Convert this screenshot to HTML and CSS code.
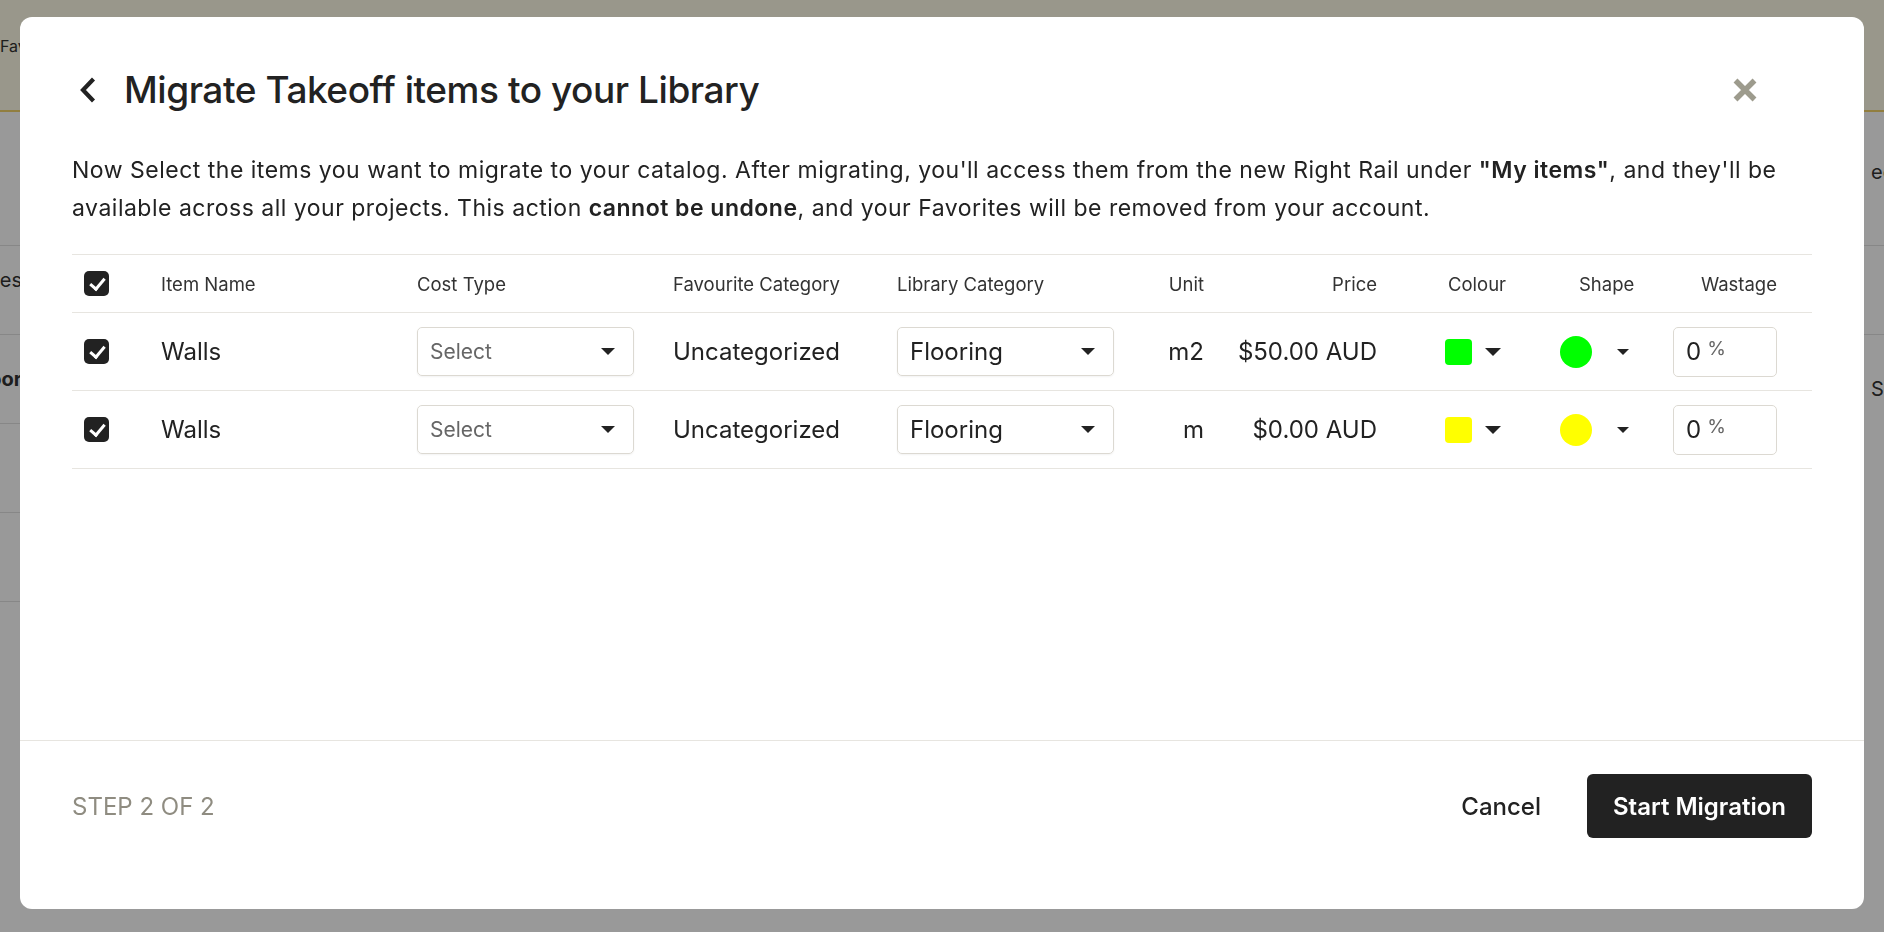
FILE: index.html
```html
<!DOCTYPE html>
<html lang="en">
<head>
<meta charset="utf-8">
<title>Migrate Takeoff items to your Library</title>
<link rel="stylesheet" href="styles.css">
</head>
<body>
  <!-- page behind the dialog -->
  <div class="page">
    <header class="page-top">
      <span class="page-tab">Favorites</span>
    </header>
    <div class="page-main">
      <div class="page-side">
        <div class="side-row side-row-tall"></div>
        <div class="side-row"><span>Categories</span></div>
        <div class="side-row"><strong>Floor</strong></div>
        <div class="side-row"></div>
        <div class="side-row"></div>
      </div>
      <div class="page-content"></div>
      <div class="page-rail">
        <div class="rail-row rail-row-top"><span>edit</span></div>
        <div class="rail-row"></div>
        <div class="rail-row rail-row-text"><span>Save</span></div>
      </div>
    </div>
  </div>

  <div class="overlay">
    <div class="modal" role="dialog" aria-labelledby="migrate-title">
      <div class="modal-body">
        <div class="title-row">
          <button class="back" type="button" aria-label="Back">
            <svg width="20" height="28" viewBox="0 0 20 28"><path d="M15.5 3 L5 14 L15.5 25" fill="none" stroke="#222" stroke-width="4.2" stroke-linejoin="miter"/></svg>
          </button>
          <h1 id="migrate-title" class="title">Migrate Takeoff items to your Library</h1>
          <button class="close" type="button" aria-label="Close">
            <svg width="24" height="24" viewBox="0 0 24 24"><path d="M2.5 2.5 L21.5 21.5 M21.5 2.5 L2.5 21.5" stroke="#9d9b8d" stroke-width="5.5"/></svg>
          </button>
        </div>

        <p class="intro">Now Select the items you want to migrate to your catalog. After migrating, you'll access them from the new Right Rail under <b>"My items"</b>, and they'll be available across all your projects. This action <b>cannot be undone</b>, and your Favorites will be removed from your account.</p>

        <div class="table">
          <div class="row head">
            <div class="cell cell-check"><span class="check"></span></div>
            <div class="cell">Item Name</div>
            <div class="cell">Cost Type</div>
            <div class="cell">Favourite Category</div>
            <div class="cell">Library Category</div>
            <div class="cell cell-right">Unit</div>
            <div class="cell cell-right">Price</div>
            <div class="cell head-colour">Colour</div>
            <div class="cell head-shape">Shape</div>
            <div class="cell cell-right">Wastage</div>
            <div class="cell"></div>
          </div>

          <div class="row item">
            <div class="cell cell-check"><span class="check"></span></div>
            <div class="cell">Walls</div>
            <div class="cell"><div class="select cost"><span class="placeholder">Select</span><span class="caret"></span></div></div>
            <div class="cell">Uncategorized</div>
            <div class="cell"><div class="select"><span>Flooring</span><span class="caret"></span></div></div>
            <div class="cell cell-right">m2</div>
            <div class="cell cell-right">$50.00 AUD</div>
            <div class="cell cell-colour"><span class="swatch green"></span><span class="caret caret-lg"></span></div>
            <div class="cell cell-shape"><span class="dot green"></span><span class="caret caret-sm"></span></div>
            <div class="cell cell-right"><div class="wastage"><span class="num">0</span><span class="pct">%</span></div></div>
            <div class="cell"></div>
          </div>

          <div class="row item">
            <div class="cell cell-check"><span class="check"></span></div>
            <div class="cell">Walls</div>
            <div class="cell"><div class="select cost"><span class="placeholder">Select</span><span class="caret"></span></div></div>
            <div class="cell">Uncategorized</div>
            <div class="cell"><div class="select"><span>Flooring</span><span class="caret"></span></div></div>
            <div class="cell cell-right">m</div>
            <div class="cell cell-right">$0.00 AUD</div>
            <div class="cell cell-colour"><span class="swatch yellow"></span><span class="caret caret-lg"></span></div>
            <div class="cell cell-shape"><span class="dot yellow"></span><span class="caret caret-sm"></span></div>
            <div class="cell cell-right"><div class="wastage"><span class="num">0</span><span class="pct">%</span></div></div>
            <div class="cell"></div>
          </div>
        </div>
      </div>

      <footer class="modal-footer">
        <span class="step">STEP 2 OF 2</span>
        <div class="actions">
          <button class="btn-cancel" type="button">Cancel</button>
          <button class="btn-primary" type="button">Start Migration</button>
        </div>
      </footer>
    </div>
  </div>
</body>
</html>
```

FILE: styles.css
```css
* { box-sizing: border-box; }

html, body {
  margin: 0;
  width: 1884px;
  height: 932px;
  overflow: hidden;
}

body {
  font-family: Inter, "Noto Sans", Arial, sans-serif;
  color: #222;
  background: #fff;
}

button {
  font: inherit;
  border: 0;
  background: none;
  padding: 0;
  cursor: pointer;
}

/* ---------- page behind the dialog ---------- */
.page {
  height: 932px;
  display: flex;
  flex-direction: column;
}

.page-top {
  height: 112px;
  background: #fffce8;
  border-bottom: 2px solid #f2d36a;
  display: flex;
  align-items: center;
  padding-bottom: 18px;
}

.page-tab {
  font-size: 16px;
  color: #333;
}

.page-main {
  flex: 1;
  display: flex;
}

.page-side {
  width: 22px;
  display: flex;
  flex-direction: column;
}

.side-row {
  height: 89px;
  border-bottom: 1px solid #e2e2e2;
  display: flex;
  align-items: center;
  justify-content: flex-end;
  overflow: hidden;
  white-space: nowrap;
  font-size: 20px;
  color: #333;
}

.side-row-tall {
  height: 134px;
}

.side-row span { padding-bottom: 20px; }

.page-content { flex: 1; }

.page-rail {
  width: 20px;
  display: flex;
  flex-direction: column;
  overflow: hidden;
}

.rail-row {
  height: 89px;
  border-bottom: 1px solid #e2e2e2;
  white-space: nowrap;
  font-size: 20px;
  color: #333;
  padding-left: 7px;
}

.rail-row-top {
  height: 134px;
  padding-top: 48px;
}

.rail-row-text {
  height: 180px;
  border-bottom: 0;
  padding-top: 42px;
}

/* ---------- dialog ---------- */
.overlay {
  position: fixed;
  inset: 0;
  background: rgba(0, 0, 0, 0.4);
  display: flex;
  justify-content: center;
  align-items: flex-start;
  padding-top: 17px;
}

.modal {
  width: 1844px;
  height: 892px;
  background: #fff;
  border-radius: 12px;
  display: flex;
  flex-direction: column;
  overflow: hidden;
}

.modal-body {
  flex: 1;
  padding: 51px 52px 0;
}

.title-row {
  display: flex;
  align-items: center;
  height: 44px;
}

.back {
  width: 20px;
  height: 28px;
  margin-left: 6px;
  margin-right: 26px;
  display: flex;
}

.title {
  margin: 0;
  font-size: 37px;
  font-weight: 500;
  line-height: 44px;
  letter-spacing: -0.45px;
  color: #222;
}

.close {
  margin-left: auto;
  margin-right: 55px;
  width: 24px;
  height: 24px;
  display: flex;
}

.intro {
  margin: 39px 0 0;
  font-size: 23px;
  line-height: 38px;
  letter-spacing: 0.5px;
  color: #222;
}

.intro b { font-weight: 600; }

/* ---------- table ---------- */
.table {
  margin-top: 27px;
  border-top: 1px solid #e7e5e0;
}

.row {
  display: grid;
  grid-template-columns: 89px 256px 256px 224px 237px 70px 173px 183px 112px 105px 35px;
  border-bottom: 1px solid #e7e5e0;
}

.row.head {
  height: 58px;
  font-size: 18.5px;
  color: #333;
}

.row.item {
  height: 78px;
  font-size: 24px;
  color: #222;
}

.cell {
  display: flex;
  align-items: center;
  white-space: nowrap;
}

.cell-right { justify-content: flex-end; }

.cell-check { padding-left: 12px; }

.check {
  width: 25px;
  height: 25px;
  border-radius: 5px;
  background: #222;
  position: relative;
}

.check::after {
  content: "";
  position: absolute;
  left: 8.5px;
  top: 4px;
  width: 6px;
  height: 12px;
  border-right: 3px solid #fff;
  border-bottom: 3px solid #fff;
  transform: rotate(40deg);
}

.head-colour { padding-left: 71px; }
.head-shape { padding-left: 19px; }

.select {
  width: 217px;
  height: 49px;
  border: 1px solid #dcd9d2;
  border-radius: 5px;
  box-shadow: 0 1px 2px rgba(0, 0, 0, 0.05);
  display: flex;
  align-items: center;
  justify-content: space-between;
  padding: 0 18px 0 12px;
}

.placeholder {
  font-size: 21px;
  color: #666;
}

.caret {
  width: 0;
  height: 0;
  border-left: 7.5px solid transparent;
  border-right: 7.5px solid transparent;
  border-top: 7.5px solid #222;
}

.caret-lg {
  border-left-width: 8px;
  border-right-width: 8px;
  border-top-width: 8px;
}

.caret-sm {
  border-left-width: 6.5px;
  border-right-width: 6.5px;
  border-top-width: 6.5px;
}

.cell-colour {
  padding-left: 68px;
  gap: 13px;
}

.swatch {
  width: 27px;
  height: 26px;
  border-radius: 4px;
}

.cell-shape { gap: 25px; }

.dot {
  width: 32px;
  height: 32px;
  border-radius: 50%;
}

.green { background: #00ff00; }
.yellow { background: #ffff00; }

.wastage {
  width: 104px;
  height: 50px;
  border: 1px solid #dcd9d2;
  border-radius: 5px;
  display: flex;
  align-items: center;
  padding-left: 12px;
  gap: 6px;
}

.num { font-size: 24px; color: #222; }

.pct {
  font-size: 19px;
  color: #666;
  margin-top: -6px;
}

/* ---------- footer ---------- */
.modal-footer {
  height: 169px;
  border-top: 1px solid #e7e5e0;
  display: flex;
  justify-content: space-between;
  align-items: flex-start;
  padding: 33px 52px 0;
}

.step {
  height: 64px;
  display: flex;
  align-items: center;
  font-size: 24px;
  color: #8f8c81;
}

.actions {
  display: flex;
  align-items: center;
  gap: 46px;
}

.btn-cancel {
  font-size: 24px;
  font-weight: 500;
  color: #222;
}

.btn-primary {
  height: 64px;
  padding: 0 26px;
  border-radius: 6px;
  background: #222;
  color: #fff;
  font-size: 24px;
  font-weight: 600;
}
```
